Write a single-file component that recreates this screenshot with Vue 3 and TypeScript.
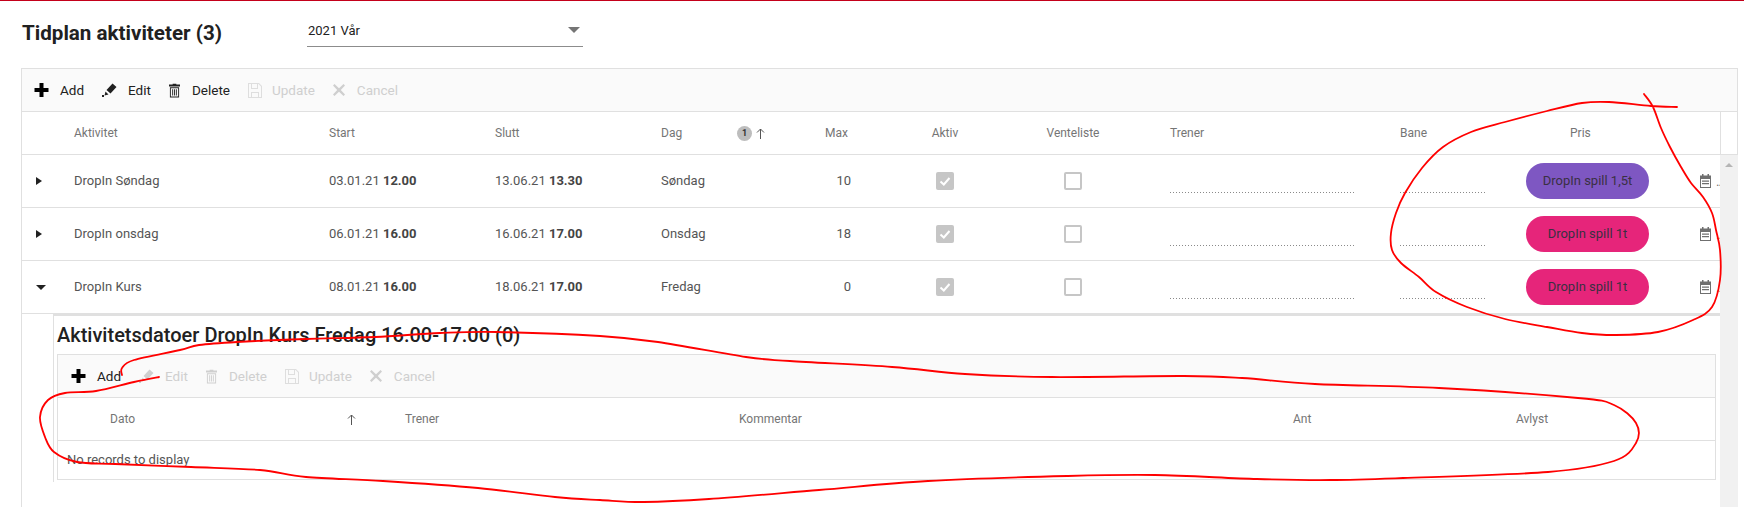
<script setup lang="ts">
type Pt = [number, number]

function smooth(pts: Pt[]): string {
  let d = `M${pts[0][0]} ${pts[0][1]}`
  for (let i = 0; i < pts.length - 1; i++) {
    const p0 = pts[Math.max(i - 1, 0)]
    const p1 = pts[i]
    const p2 = pts[i + 1]
    const p3 = pts[Math.min(i + 2, pts.length - 1)]
    const c1x = p1[0] + (p2[0] - p0[0]) / 6
    const c1y = p1[1] + (p2[1] - p0[1]) / 6
    const c2x = p2[0] - (p3[0] - p1[0]) / 6
    const c2y = p2[1] - (p3[1] - p1[1]) / 6
    d += ` C${c1x.toFixed(1)} ${c1y.toFixed(1)} ${c2x.toFixed(1)} ${c2y.toFixed(1)} ${p2[0]} ${p2[1]}`
  }
  return d
}

const scribbles: string[] = [
  smooth([[1644,94],[1653,107],[1661,128],[1670,147],[1681,167],[1691,183],[1703,197],[1712,213],[1716,230],[1720,250],[1720,280],[1712,307],[1693,320],[1658,332],[1616,335],[1582,333],[1547,327],[1505,319],[1467,307],[1436,292],[1419,277],[1401,263],[1392,250],[1391,233],[1396,213],[1405,193],[1422,168],[1443,147],[1471,132],[1505,122],[1547,111],[1582,103],[1609,102],[1651,106],[1677,107]]),
  smooth([[122,375],[122,368],[134,360],[180,350],[199,345],[237,342],[306,339],[375,337],[440,333],[497,332],[600,336],[658,342],[746,357],[790,361],[892,367],[965,374],[1052,377],[1184,376],[1242,378],[1315,384],[1439,388],[1578,398],[1614,405],[1636,423],[1636,443],[1614,461],[1548,472],[1403,478],[1330,480],[1257,479],[1155,475],[1067,476],[928,481],[819,490],[709,499],[644,502],[600,500],[555,497],[478,488],[383,481],[306,477],[260,470],[191,467],[115,464],[77,462],[54,452],[45,437],[40,417],[48,400],[65,393],[96,391],[134,382],[159,377]]),
]

const rows = [
  { name: 'DropIn Søndag', sd: '03.01.21', st: '12.00', ed: '13.06.21', et: '13.30', day: 'Søndag', max: 10, price: 'DropIn spill 1,5t', tone: 'purple', open: false },
  { name: 'DropIn onsdag', sd: '06.01.21', st: '16.00', ed: '16.06.21', et: '17.00', day: 'Onsdag', max: 18, price: 'DropIn spill 1t', tone: 'pink', open: false },
  { name: 'DropIn Kurs', sd: '08.01.21', st: '16.00', ed: '18.06.21', et: '17.00', day: 'Fredag', max: 0, price: 'DropIn spill 1t', tone: 'pink', open: true },
]
</script>

<template>
  <div class="page">
    <header class="top">
      <h1 class="title">Tidplan aktiviteter (3)</h1>
      <div class="select">
        <span>2021 Vår</span>
        <i class="caret"></i>
      </div>
    </header>

    <section class="grid">
      <div class="toolbar main-bar">
        <button class="tool"><svg class="ic plus" viewBox="0 0 14 14"><path d="M5 0h4v5h5v4H9v5H5V9H0V5h5z" /></svg>Add</button>
        <button class="tool"><svg class="ic" viewBox="0 0 15 14"><path d="M10.500.5L14.500 4 8.500 10.500 4.500 7zM3.500 8.500L6.500 11.500 2.500 12.500zM0 12h2v2H0z" /></svg>Edit</button>
        <button class="tool"><svg class="ic trash" viewBox="0 0 12 15"><path d="M4 0h4v1h4v2H0V1h4zM1 4h10v11H1zM2 5v9h8V5zM3.500 6h1v7h-1zM5.500 6h1v7h-1zM7.500 6h1v7h-1z" fill-rule="evenodd" /></svg>Delete</button>
        <button class="tool off"><svg class="ic save" viewBox="0 0 14 15"><path d="M0 0h11l3 3v12H0zM1 1v13h12V3.500L10.500 1H10v5H3V1zM4 1v4h5V1zM3 9h8v5H3zM4 10v4h6v-4z" fill-rule="evenodd" /></svg>Update</button>
        <button class="tool off"><svg class="ic x" viewBox="0 0 12 12"><path d="M1.500 0L6 4.200 10.500 0 12 1.500 7.800 6 12 10.500 10.500 12 6 7.800 1.500 12 0 10.500 4.200 6 0 1.500z" /></svg>Cancel</button>
      </div>

      <div class="head-wrap">
        <div class="cols head">
          <span></span>
          <span>Aktivitet</span>
          <span>Start</span>
          <span>Slutt</span>
          <span class="dag">Dag<b class="badge">1</b><svg class="sort" viewBox="0 0 9 11"><path d="M4.500 11V1M1 4.500L4.500 1 8 4.500" /></svg></span>
          <span class="num head-num">Max</span>
          <span class="mid">Aktiv</span>
          <span class="mid">Venteliste</span>
          <span class="pad-t">Trener</span>
          <span>Bane</span>
          <span class="pris">Pris</span>
          <span></span>
        </div>
        <div class="sb-head"></div>
      </div>

      <div class="content">
        <div class="main">
          <div v-for="r in rows" :key="r.name" class="cols row">
            <span class="arrow" :class="{ down: r.open }"></span>
            <span>{{ r.name }}</span>
            <span>{{ r.sd }} <b>{{ r.st }}</b></span>
            <span>{{ r.ed }} <b>{{ r.et }}</b></span>
            <span>{{ r.day }}</span>
            <span class="num">{{ r.max }}</span>
            <span class="mid"><i class="box on"><svg viewBox="0 0 18 18"><path d="M4.500 9.500L7.800 12.500 13.500 6" /></svg></i></span>
            <span class="mid"><i class="box"></i></span>
            <span class="pad-t"><i class="dots w1"></i></span>
            <span><i class="dots w2"></i></span>
            <span class="mid"><i class="pill" :class="r.tone">{{ r.price }}</i></span>
            <span class="cal">
              <svg viewBox="0 0 11 14"><path d="M2 0h1.500v1.500h4V0H9v1.500h2V14H0V1.500h2zM1 5v8h9V5zM2 6.500h7v1.300H2zM2 9h7v1.300H2z" fill-rule="evenodd" /></svg>
              <em>..</em>
            </span>
          </div>

          <div class="detail">
            <h2 class="sub-title">Aktivitetsdatoer DropIn Kurs Fredag 16.00-17.00 (0)</h2>
            <div class="subgrid">
              <div class="toolbar sub-bar">
                <button class="tool"><svg class="ic plus" viewBox="0 0 14 14"><path d="M5 0h4v5h5v4H9v5H5V9H0V5h5z" /></svg>Add</button>
                <button class="tool off"><svg class="ic" viewBox="0 0 15 14"><path d="M10.500.5L14.500 4 8.500 10.500 4.500 7zM3.500 8.500L6.500 11.500 2.500 12.500zM0 12h2v2H0z" /></svg>Edit</button>
                <button class="tool off"><svg class="ic trash" viewBox="0 0 12 15"><path d="M4 0h4v1h4v2H0V1h4zM1 4h10v11H1zM2 5v9h8V5zM3.500 6h1v7h-1zM5.500 6h1v7h-1zM7.500 6h1v7h-1z" fill-rule="evenodd" /></svg>Delete</button>
                <button class="tool off"><svg class="ic save" viewBox="0 0 14 15"><path d="M0 0h11l3 3v12H0zM1 1v13h12V3.500L10.500 1H10v5H3V1zM4 1v4h5V1zM3 9h8v5H3zM4 10v4h6v-4z" fill-rule="evenodd" /></svg>Update</button>
                <button class="tool off"><svg class="ic x" viewBox="0 0 12 12"><path d="M1.500 0L6 4.200 10.500 0 12 1.500 7.800 6 12 10.500 10.500 12 6 7.800 1.500 12 0 10.500 4.200 6 0 1.500z" /></svg>Cancel</button>
              </div>
              <div class="sub-cols">
                <span>Dato</span>
                <span class="sub-sort"><svg class="sort" viewBox="0 0 9 11"><path d="M4.500 11V1M1 4.500L4.500 1 8 4.500" /></svg></span>
                <span>Trener</span>
                <span>Kommentar</span>
                <span>Ant</span>
                <span>Avlyst</span>
              </div>
              <div class="empty">No records to display</div>
            </div>
          </div>
        </div>
        <div class="scrollbar"><i></i></div>
      </div>
    </section>

    <svg class="ink" viewBox="0 0 1744 507" width="1744" height="507">
      <path v-for="(d, i) in scribbles" :key="i" :d="d" />
    </svg>
  </div>
</template>

<style>
html, body { margin: 0; background: #fff; }
</style>

<style scoped>
.page {
  position: relative;
  width: 1744px;
  height: 507px;
  overflow: hidden;
  box-sizing: border-box;
  border-top: 1px solid #c4001a;
  background: #fff;
  font-family: Roboto, "Liberation Sans", sans-serif;
  font-size: 13px;
  color: #555;
}
.top {
  display: flex;
  align-items: flex-start;
  height: 67px;
  padding-left: 22px;
}
.title {
  width: 285px;
  margin: 20px 0 0;
  font-size: 20.6px;
  line-height: 24px;
  font-weight: 700;
  color: #212121;
}
.select {
  display: flex;
  align-items: center;
  justify-content: space-between;
  box-sizing: border-box;
  width: 276px;
  height: 46px;
  padding: 14px 3px 0 1px;
  border-bottom: 1px solid #8c8c8c;
  color: #212121;
  font-size: 13px;
}
.caret {
  width: 0;
  height: 0;
  border-left: 6px solid transparent;
  border-right: 6px solid transparent;
  border-top: 6px solid #757575;
  margin-top: -1px;
}
.grid {
  margin-left: 21px;
  width: 1717px;
  height: 439px;
  box-sizing: border-box;
  border: 1px solid #e0e0e0;
  border-bottom: 0;
  display: flex;
  flex-direction: column;
}
.toolbar {
  display: flex;
  align-items: center;
  height: 42px;
  background: #fafafa;
  border-bottom: 1px solid #e0e0e0;
  flex: none;
}
.main-bar { padding-left: 12px; }
.sub-bar { padding-left: 13px; }
.tool {
  display: flex;
  align-items: center;
  padding: 0;
  margin-right: 18px;
  border: 0;
  background: none;
  font: inherit;
  font-size: 13.5px;
  color: #212121;
}
.tool.off { color: #cfcfcf; }
.ic {
  height: 14px;
  width: 15px;
  margin-right: 11px;
  fill: currentColor;
  flex: none;
}
.ic.plus { fill: #000; }
.ic.trash { width: 11px; margin-right: 12px; height: 15px; }
.ic.save { width: 14px; height: 15px; margin-right: 10px; fill: #dedede; }
.ic.x { width: 12px; height: 12px; margin-right: 12px; }
.head-wrap {
  display: flex;
  flex: none;
  height: 43px;
  box-sizing: border-box;
  border-bottom: 1px solid #e0e0e0;
}
.sb-head { flex: 1; border-left: 1px solid #e0e0e0; }
.cols {
  display: grid;
  grid-template-columns: 52px 255px 166px 166px 129px 90px 130px 126px 264px 110px 155px 55px;
  align-items: center;
  width: 1698px;
  flex: none;
}
.head { color: #757575; font-size: 12px; }
.dag { display: flex; align-items: center; }
.badge {
  display: inline-block;
  width: 15px;
  height: 15px;
  margin-left: 55px;
  border-radius: 50%;
  background: #bdbdbd;
  color: #333;
  font-size: 9px;
  line-height: 15px;
  text-align: center;
}
.sort {
  width: 9px;
  height: 11px;
  margin-left: 4px;
  fill: none;
  stroke: #555;
  stroke-width: 1;
}
.num { text-align: right; padding-right: 29px; }
.head-num { padding-right: 32px; }
.mid { display: flex; justify-content: center; align-items: center; }
.pad-t { padding-left: 34px; }
.pris { padding-left: 60px; }
.content { display: flex; flex: 1; min-height: 0; }
.main { width: 1698px; flex: none; }
.scrollbar {
  flex: 1;
  margin-right: -1px;
  background: #f1f1f1;
  display: flex;
  justify-content: center;
  padding-top: 8px;
}
.scrollbar i {
  width: 0;
  height: 0;
  border-left: 4px solid transparent;
  border-right: 4px solid transparent;
  border-bottom: 4px solid #b5b5b5;
}
.row {
  height: 53px;
  box-sizing: border-box;
  border-bottom: 1px solid #e0e0e0;
  overflow: hidden;
  line-height: 14px;
}
.row b { font-weight: 700; color: #444; }
.arrow {
  justify-self: start;
  margin-left: 14px;
  width: 0;
  height: 0;
  border-top: 4px solid transparent;
  border-bottom: 4px solid transparent;
  border-left: 6px solid #212121;
}
.arrow.down {
  border-left: 5px solid transparent;
  border-right: 5px solid transparent;
  border-top: 5px solid #212121;
  border-bottom: 0;
}
.box {
  display: block;
  box-sizing: border-box;
  width: 18px;
  height: 18px;
  border: 2px solid #c6c6c6;
  border-radius: 2px;
  background: #fff;
}
.box.on { background: #c6c6c6; border: 0; }
.box svg {
  display: block;
  width: 18px;
  height: 18px;
  fill: none;
  stroke: #fff;
  stroke-width: 2;
}
.dots {
  display: block;
  height: 24px;
  background: repeating-linear-gradient(90deg, #8a8a8a 0 1px, transparent 1px 3px) left bottom / 100% 1px no-repeat;
}
.w1 { width: 185px; }
.w2 { width: 85px; }
.pill {
  display: block;
  width: 123px;
  height: 36px;
  border-radius: 18px;
  color: #3a3042;
  font-style: normal;
  line-height: 35px;
  text-align: center;
}
.purple { background: #7e57c2; }
.pink { background: #e6257a; }
.cal { display: flex; align-items: center; padding-left: 35px; }
.cal svg { width: 11px; height: 14px; fill: #6f6f6f; flex: none; }
.cal em { margin-left: 5px; font-style: normal; color: #777; white-space: nowrap; letter-spacing: -1px; line-height: 1; }
.detail {
  box-sizing: border-box;
  margin-left: 31px;
  height: 168px;
  border-left: 1px solid #e0e0e0;
  border-top: 2px solid #e0e0e0;
  padding-left: 3px;
  width: 1667px;
}
.sub-title {
  margin: 0;
  height: 38px;
  padding-top: 7px;
  box-sizing: border-box;
  font-size: 20px;
  line-height: 24px;
  font-weight: 500;
  color: #212121;
}
.subgrid {
  width: 1659px;
  box-sizing: border-box;
  border: 1px solid #e0e0e0;
}
.sub-cols {
  display: grid;
  grid-template-columns: 289px 58px 334px 554px 223px 1fr;
  align-items: center;
  height: 43px;
  box-sizing: border-box;
  border-bottom: 1px solid #e0e0e0;
  color: #757575;
  font-size: 12px;
}
.sub-cols > span:first-child { padding-left: 52px; }
.sub-sort { display: flex; }
.sub-sort .sort { margin-left: 0; }
.empty {
  height: 38px;
  padding: 10px 0 0 9px;
  box-sizing: border-box;
  line-height: 18px;
}
.ink {
  position: absolute;
  left: 0;
  top: -1px;
  pointer-events: none;
}
.ink path {
  fill: none;
  stroke: #f00;
  stroke-width: 1.8;
  stroke-linecap: round;
  stroke-linejoin: round;
}
</style>
